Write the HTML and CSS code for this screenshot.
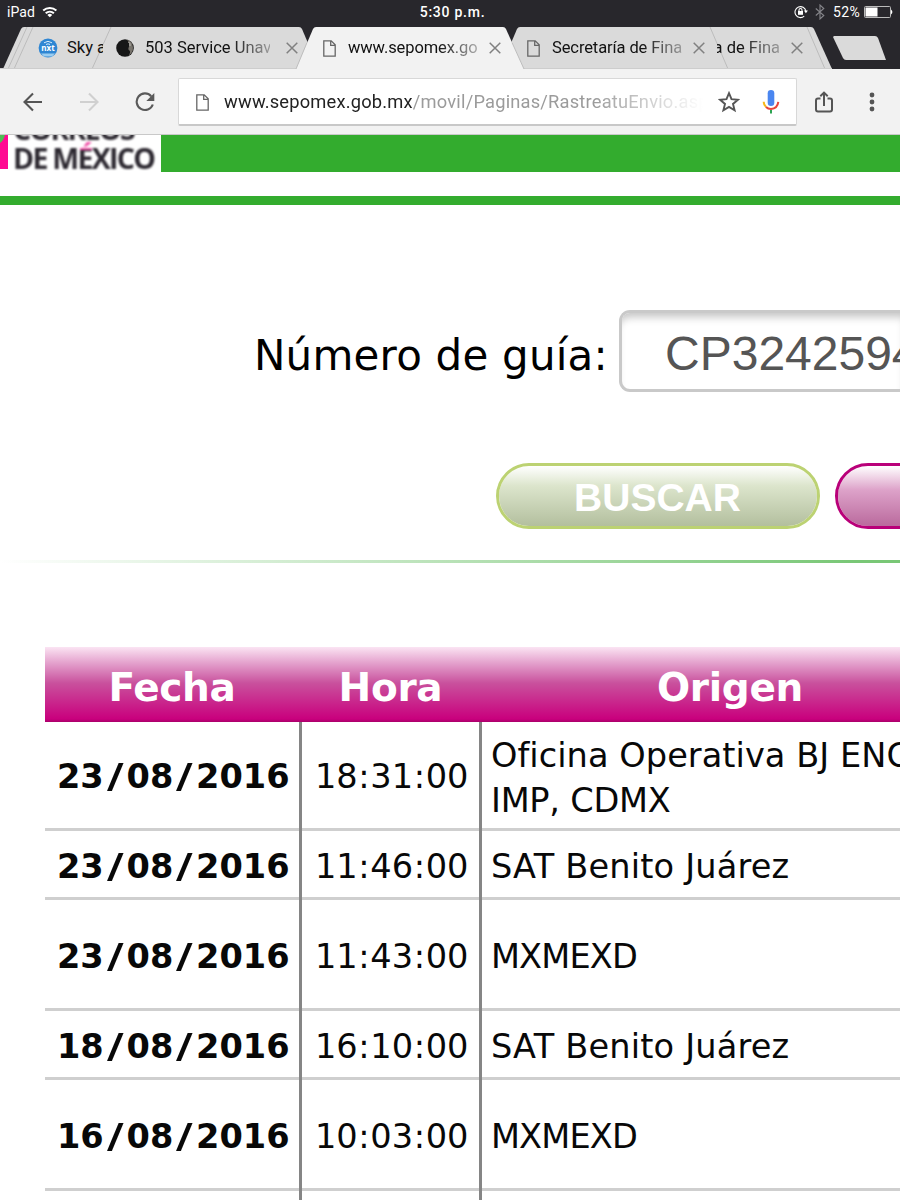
FILE: index.html
```html
<!DOCTYPE html>
<html lang="es">
<head>
<meta charset="utf-8">
<title>Correos de México</title>
<link rel="stylesheet" href="styles.css">
</head>
<body>
<header class="status">
  <div class="status-left"><span>iPad</span>
    <svg width="16" height="12" viewBox="0 0 16 12" fill="none" stroke="#fff" stroke-width="2"><path d="M1.2 4.6a10 10 0 0 1 13.2 0M3.7 7.3a6.2 6.2 0 0 1 8.2 0"/><path d="M7.8 11.2L5.4 8.9a3.6 3.6 0 0 1 4.8 0z" fill="#fff" stroke="none"/></svg>
  </div>
  <div class="clock">5:30 p.m.</div>
  <div class="status-right">
    <svg width="14" height="14" viewBox="0 0 14 14" fill="none" stroke="#fff" stroke-width="1.1"><path d="M10.2 11.2A5.5 5.5 0 1 1 11.9 6"/><path d="M9.9 5.6h4l-2 2.6z" fill="#fff" stroke="none"/><rect x="4" y="6" width="5" height="3.8" fill="#fff" stroke="none"/><path d="M5 6V5a1.5 1.5 0 0 1 3 0v1"/></svg>
    <svg class="bt" width="10" height="16" viewBox="0 0 10 16" fill="none" stroke="#85858a" stroke-width="1.1"><path d="M.8 4.5l8 7L5 15V1l3.800 3.500-8 7"/></svg>
    <span class="pct">52%</span>
    <svg width="29" height="12" viewBox="0 0 29 12"><rect x=".5" y=".5" width="26" height="11" rx="1" fill="none" stroke="#bbb"/><rect x="1.500" y="1.500" width="12" height="9" fill="#fff"/><path d="M27 3.500q2.800 2.500 0 5z" fill="#fff"/></svg>
  </div>
</header>

<nav class="tabs">
  <svg class="tab-shapes" width="900" height="42" viewBox="0 0 900 42">
    <path d="M3 42L21 2q1-2 3-2H299q2 0 3 2L319 42z" fill="#dadada"/>
    <path d="M500 42L517 2q1-2 3-2H811q2 0 3 2L832 42z" fill="#dadada"/>
    <path d="M8 42L27 0M14 42L33 0M92 42L111 0M710 0L728 42M807 0L825 42" stroke="#bcbcbc" fill="none"/>
    <path d="M0 41.500H296M522 41.500H832" stroke="#cdcdcd"/>
    <path d="M296 42L313 2q1-2 3-2H503q2 0 3 2L524 42z" fill="#f2f2f2"/>
    <path d="M296 42L307 15.500M512 15.500L524 42" stroke="#bdbdbd" fill="none"/>
    <path d="M834 9H875q2 0 3 2L886 33H846q-2 0-3-2L833 10z" fill="#dadada"/>
  </svg>
  <div class="tab t1">
    <svg class="fav" width="20" height="20" viewBox="0 0 20 20"><circle cx="10" cy="10" r="9.400" fill="#2f86d3"/><path d="M3 15.500h14l-3 3H6z" fill="#9ccdf0"/><path d="M6 4.800q4-3 8 0M8 6.500q2-1.300 4 0" fill="none" stroke="#d5eaf9"/><text x="10" y="13" text-anchor="middle" class="nxt">nxt</text></svg>
    <span class="title">Sky a</span>
  </div>
  <div class="tab t2">
    <svg class="fav" width="18" height="18" viewBox="0 0 18 18"><circle cx="9" cy="9" r="8.800" fill="#171717"/><path d="M11 .6a8.800 8.800 0 0 1 1.500 16q2.500-3 1-5-2-1-.5-4 1-3-2-7z" fill="#77736c"/><path d="M12.500 3q2 1 1.500 4" stroke="#c4c2bb" fill="none"/></svg>
    <span class="title">503 Service Unav</span>
    <svg class="close" width="12" height="12" viewBox="0 0 12 12"><path d="M.7.7l10.600 10.600M11.300.7L.7 11.300"/></svg>
  </div>
  <div class="tab t3">
    <svg class="page" width="13" height="17" viewBox="0 0 13 17"><path d="M.8.8h7.400l4 4v11.400H.8zM7.700.8v4.500h4.500"/></svg>
    <span class="title">www.sepomex.go</span>
    <svg class="close" width="12" height="12" viewBox="0 0 12 12"><path d="M.7.7l10.600 10.600M11.300.7L.7 11.300"/></svg>
  </div>
  <div class="tab t4">
    <svg class="page" width="13" height="17" viewBox="0 0 13 17"><path d="M.8.8h7.400l4 4v11.400H.8zM7.700.8v4.500h4.500"/></svg>
    <span class="title">Secretaría de Fina</span>
    <svg class="close" width="12" height="12" viewBox="0 0 12 12"><path d="M.7.7l10.600 10.600M11.300.7L.7 11.300"/></svg>
  </div>
  <div class="tab t5">
    <span class="title">a de Fina</span>
    <svg class="close" width="12" height="12" viewBox="0 0 12 12"><path d="M.7.7l10.600 10.600M11.300.7L.7 11.300"/></svg>
  </div>
</nav>

<div class="toolbar">
  <svg class="back" width="20" height="20" viewBox="0 0 20 20"><path d="M19 10H2M10 1.500L1.500 10l8.500 8.500"/></svg>
  <svg class="fwd" width="20" height="20" viewBox="0 0 20 20"><path d="M1 10h17M10 1.500L18.500 10 10 18.500"/></svg>
  <svg class="reload" width="20" height="20" viewBox="0 0 20 20"><path d="M17.800 12.500A8.300 8.300 0 1 1 16.200 4.200" fill="none" stroke="#5a5a5a" stroke-width="2.100"/><path d="M19.300 1v8h-8z" fill="#5a5a5a"/></svg>
  <div class="omnibox">
    <svg class="page" width="13" height="17" viewBox="0 0 13 17"><path d="M.8.8h7.400l4 4v11.400H.8zM7.700.8v4.500h4.500"/></svg>
    <span class="url">www.sepomex.gob.mx<span class="path">/movil/Paginas/RastreatuEnvio.asp</span></span>
    <svg class="star" width="22" height="22" viewBox="0 0 22 22"><path d="M11 2.200l2.500 6 6.500.5-5 4.200 1.600 6.400L11 15.900l-5.600 3.400L7 12.900 2 8.700l6.500-.5z" fill="none" stroke="#555" stroke-width="1.900"/></svg>
    <svg class="mic" width="18" height="26" viewBox="0 0 18 26"><rect x="5.700" y="1" width="6.600" height="16" rx="3.300" fill="#4a86f0"/><path d="M1.700 12.800q0 3.200 2.400 5.300" fill="none" stroke="#f6b81a" stroke-width="2"/><path d="M4 18q2 2 5 2 6.500-.5 7.300-7.200" fill="none" stroke="#e7463c" stroke-width="2"/><path d="M9 21v3.500" stroke="#2da452" stroke-width="2"/></svg>
  </div>
  <svg class="share" width="18" height="22" viewBox="0 0 18 22" fill="none" stroke="#555" stroke-width="2"><path d="M5.500 7.500H3Q1 7.500 1 9.500v9q0 2 2 2h12q2 0 2-2v-9q0-2-2-2h-2.500M9 15V2M5.300 5.300L9 1.600l3.700 3.700"/></svg>
  <svg class="dots" width="6" height="20" viewBox="0 0 6 20" fill="#555"><circle cx="3" cy="3" r="2.400"/><circle cx="3" cy="10" r="2.400"/><circle cx="3" cy="17" r="2.400"/></svg>
</div>

<main>
  <div class="banner">
    <div class="logo">
      <svg width="10" height="37" viewBox="0 0 10 37"><path d="M0 0H8V34H0z" fill="#ff0a92"/><path d="M0 0H5Q4 5 0 8z" fill="#4ebc55"/></svg>
      <div class="logo-text"><span class="l1">CORREOS</span><span class="l2">DE M<span class="acc">É</span>XICO</span></div>
    </div>
  </div>
  <div class="stripe"></div>
  <div class="form-row">
    <label class="guide">Número de guía:</label>
    <div class="field">CP3242594</div>
  </div>
  <div class="buttons">
    <div class="btn green">BUSCAR</div>
    <div class="btn pink"></div>
  </div>
  <div class="rule"></div>
  <section class="table">
    <div class="row head"><div class="d">Fecha</div><div class="h">Hora</div><div class="o">Origen</div></div>
    <div class="row r1"><div class="d">23<i>/</i>08<i>/</i>2016</div><div class="h">18<i>:</i>31<i>:</i>00</div><div class="o"><span class="a">Oficina Operativa BJ ENC</span><span class="b">IMP, CDMX</span></div></div>
    <div class="row r2"><div class="d">23<i>/</i>08<i>/</i>2016</div><div class="h">11<i>:</i>46<i>:</i>00</div><div class="o"><span class="sat">SAT Benito Juárez</span></div></div>
    <div class="row r3"><div class="d">23<i>/</i>08<i>/</i>2016</div><div class="h">11<i>:</i>43<i>:</i>00</div><div class="o"><span class="mx">MXMEXD</span></div></div>
    <div class="row r2"><div class="d">18<i>/</i>08<i>/</i>2016</div><div class="h">16<i>:</i>10<i>:</i>00</div><div class="o"><span class="sat">SAT Benito Juárez</span></div></div>
    <div class="row r3"><div class="d">16<i>/</i>08<i>/</i>2016</div><div class="h">10<i>:</i>03<i>:</i>00</div><div class="o"><span class="mx">MXMEXD</span></div></div>
    <div class="row last"><div class="d"></div><div class="h"></div><div class="o"></div></div>
  </section>
</main>
</body>
</html>
```
FILE: styles.css
```css
* { box-sizing: border-box; }
html, body { margin: 0; width: 900px; height: 1200px; overflow: hidden; background: #fff; }
body { font-family: Roboto, "Liberation Sans", sans-serif; display: flex; flex-direction: column; }
svg { display: block; flex: none; }

.status { height: 27px; flex: none; background: #28272c; color: #fff; display: grid; grid-template-columns: 1fr auto 1fr; align-items: center; padding: 0 7px 3px 7px; font-size: 14px; }
.status-left, .status-right { display: flex; align-items: center; }
.status-left { gap: 7px; letter-spacing: .1px; }
.status-right { justify-content: flex-end; }
.clock { font-weight: 500; letter-spacing: .75px; padding-left: 5px; }
.bt { margin: 0 8px 0 7px; }
.pct { margin-right: 4px; letter-spacing: .3px; }

.tabs { height: 42px; flex: none; position: relative; background: #28272c; display: flex; font-size: 16.500px; color: #111; }
.tab-shapes { position: absolute; left: 0; top: 0; }
.tab { position: relative; display: flex; align-items: center; height: 42px; flex: none; }
.title { white-space: nowrap; overflow: hidden; line-height: 24px; flex: none; }
.t2 .title, .t3 .title, .t4 .title, .t5 .title { -webkit-mask-image: linear-gradient(to left, rgba(0,0,0,.3), #000 40px); mask-image: linear-gradient(to left, rgba(0,0,0,.3), #000 40px); }
.nxt { font: bold 8px "Open Sans", sans-serif; fill: #fff; }
.t1 { width: 103px; padding-left: 38px; }
.t1 .title { width: 36px; margin-left: 9px; }
.t2 { width: 204px; padding-left: 13px; }
.t2 .title { width: 125px; margin: 0 16px 0 11px; }
.t3 { width: 205px; padding-left: 16px; }
.t3 .title { width: 130px; margin: 0 11px 0 12px; letter-spacing: -.1px; }
.t4 { width: 204px; padding-left: 15px; }
.t4 .title { width: 130px; margin: 0 11px 0 12px; letter-spacing: -.1px; }
.t5 .title { width: 63px; margin: 0 11px 0 1px; direction: rtl; }
.close { fill: none; stroke: #808080; stroke-width: 1.500; }
.page { fill: none; stroke: #666; stroke-width: 1.300; }

.toolbar { height: 66px; flex: none; background: #f2f2f2; border-bottom: 1px solid #c9c9c9; display: flex; align-items: center; padding: 1px 0 0 23px; }
.back, .fwd { fill: none; stroke: #555; stroke-width: 2.100; }
.fwd { stroke: #d0d0d0; margin-left: 36px; }
.reload { margin-left: 36px; }
.omnibox { width: 619px; height: 48px; margin-left: 23px; background: #fff; border: 1px solid #d8d8d8; border-bottom: 2px solid #c8c8c8; border-radius: 2px; display: flex; align-items: center; padding: 1px 0 0 17px; flex: none; }
.url { width: 479px; margin-left: 15px; font-size: 18.300px; letter-spacing: .2px; color: #222; white-space: nowrap; overflow: hidden; line-height: 26px; -webkit-mask-image: linear-gradient(to left, transparent, #000 110px); mask-image: linear-gradient(to left, transparent, #000 110px); }
.path { color: #9b9b9b; }
.star { margin-left: 15px; }
.mic { margin-left: 22px; }
.share { margin: -1px 0 0 18px; }
.dots { margin-left: 36px; }

main { flex: none; height: 1065px; overflow: hidden; }
.banner { height: 37px; background: #33ac2e; }
.logo { width: 161px; height: 37px; background: #fff; display: flex; overflow: hidden; }
.logo-text { margin-left: 3px; display: flex; flex-direction: column; font: bold 28.500px "Open Sans", sans-serif; line-height: 29px; letter-spacing: -1.700px; color: #2c2830; filter: blur(.9px); white-space: nowrap; }
.l1 { margin-top: -20px; }
.acc { background: linear-gradient(#f04aa4 30%, #2c2830 30%); -webkit-background-clip: text; background-clip: text; color: transparent; }
.stripe { margin-top: 24px; height: 9px; background: #33ac2e; }

.form-row { display: flex; align-items: center; margin-top: 105px; height: 82px; padding-left: 254px; }
.guide { width: 365px; flex: none; font: 42px "DejaVu Sans", sans-serif; letter-spacing: .2px; line-height: 60px; padding-top: 9px; white-space: nowrap; color: #000; }
.field { width: 281px; overflow: hidden; height: 82px; flex: none; border: 3px solid #c9c9c9; border-right: 0; border-radius: 11px 0 0 11px; box-shadow: inset 0 9px 8px -5px #c4c4c4; padding: 3px 0 0 43px; font: 48px "Liberation Sans", sans-serif; line-height: 75px; color: #555; }
.buttons { display: flex; gap: 15px; margin: 71px 0 0 495.500px; height: 66px; overflow: hidden; }
.btn { width: 324px; height: 66px; flex: none; border-radius: 33px; border: 3px solid #bcd272; color: #fff; text-align: center; font: bold 39px "Liberation Sans", sans-serif; line-height: 64px; }
.green { background: linear-gradient(#fff, #dce5cc 33%, #b3bf9e) padding-box; }
.pink { background: linear-gradient(#fff, #dda2c9 40%, #ba6a9d) padding-box; border-color: #b90079; }
.rule { height: 3px; margin-top: 31px; background: linear-gradient(to right, #fff, #79c776 95%); }

.table { margin: 84px 0 0 45px; width: 855px; overflow: hidden; font: 33.600px "DejaVu Sans", sans-serif; color: #080808; }
.row { display: grid; grid-template-columns: 257px 180px 418px; background: linear-gradient(#cfcfcf, #cfcfcf) bottom / 100% 3px no-repeat; white-space: nowrap; }
.row > div { display: flex; align-items: center; overflow: hidden; }
.row i { font-style: normal; text-align: center; display: inline-block; }
.head { height: 75px; background: linear-gradient(#fbe4f3, #e5a5cf 20%, #c9519d 48%, #c9007d 96%, #a9006a); color: #fff; font-weight: bold; font-size: 39px; letter-spacing: -.3px; }
.head > div { justify-content: center; padding-top: 5px; }
.head .o { padding-left: 78px; }
.d, .h { border-right: 3px solid #858585; }
.head .d, .head .h { border-color: transparent; }
.r1 { height: 109px; }
.r2 { height: 69px; }
.r3 { height: 111px; }
.last { height: 9px; background: none; }
.row:not(.head) .d { font-weight: bold; padding-left: 12px; }
.row:not(.head) .h { padding-left: 13px; }
.row:not(.head) .o { padding-left: 9px; }
.r2 > div, .r3 > div { padding-top: 1px; }
.d i { width: 22.800px; transform: scaleX(1.35); }
.h i { width: 12.600px; }
.r1 .o { flex-direction: column; align-items: flex-start; justify-content: center; line-height: 45px; padding-top: 3px; }
.a { letter-spacing: .05px; }
.sat { letter-spacing: .18px; }
.b { letter-spacing: -.25px; }
.mx { letter-spacing: -.85px; }
```
